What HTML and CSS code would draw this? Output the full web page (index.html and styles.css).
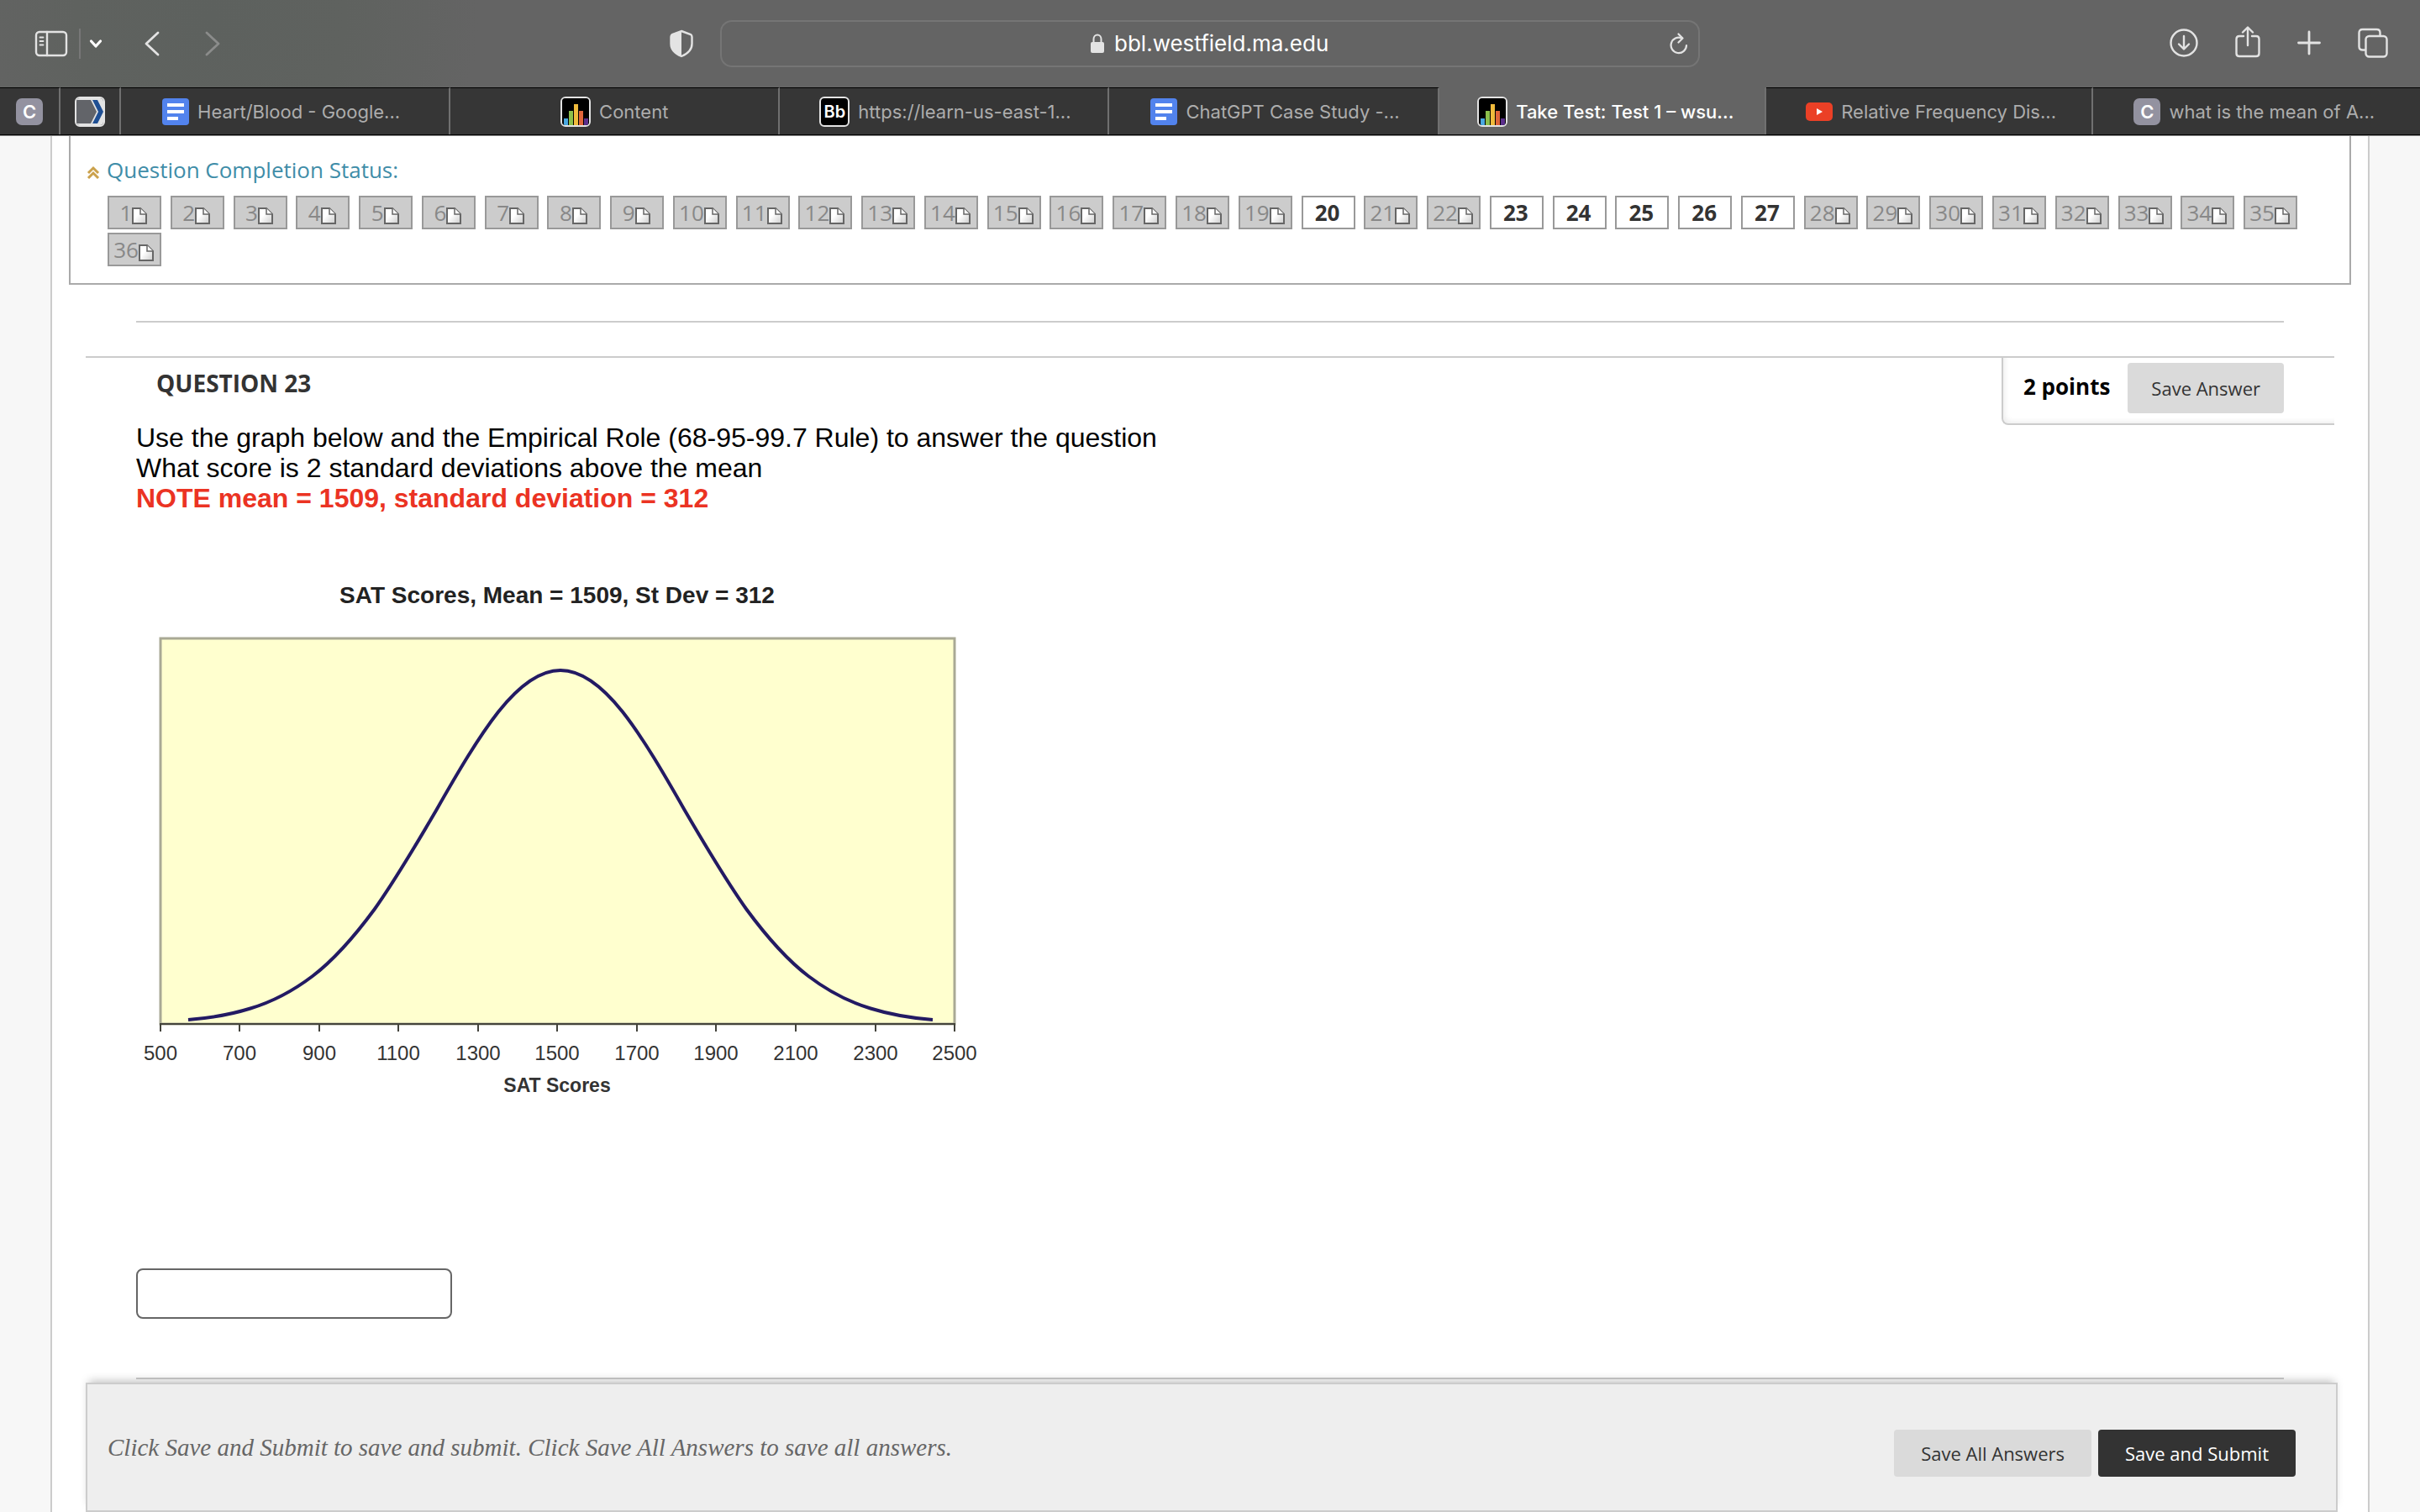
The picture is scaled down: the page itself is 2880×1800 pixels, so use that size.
FILE: index.html
```html
<!DOCTYPE html>
<html lang="en">
<head>
    <meta charset="UTF-8">
    <meta name="viewport" content="width=device-width, initial-scale=1.0">
    <title>Take Test: Test 1</title>
    <link rel="stylesheet" href="styles.css">
</head>
<body>
    <!-- Shared icons -->
    <svg class="defs" width="0" height="0" aria-hidden="true">
        <defs>
            <linearGradient id="paper" x1="0" y1="0" x2="1" y2="1">
                <stop offset="0.4" stop-color="#fff"/>
                <stop offset="1" stop-color="#ccc"/>
            </linearGradient>
        </defs>
        <symbol id="page-icon" viewBox="0 0 18 20">
            <path d="M1 1H10L17 8V19H1Z" fill="url(#paper)" stroke="#666" stroke-width="2"/>
            <path d="M10 1V8H17" fill="#fff" stroke="#666" stroke-width="1.5"/>
        </symbol>
        <symbol id="docs-icon" viewBox="0 0 32 32">
            <rect width="32" height="32" rx="4" fill="#5283ed"/>
            <path d="M6 6H26V10H6ZM6 14H26V18H6ZM6 22H19V26H6Z" fill="#fff"/>
        </symbol>
        <symbol id="chart-icon" viewBox="0 0 32 32">
            <rect width="32" height="32" fill="#000"/>
            <path d="M2 24H7V34H2Z" fill="#4aa8e0"/>
            <path d="M8 15H13V34H8Z" fill="#8cbf4b"/>
            <path d="M14 7H19V34H14Z" fill="#f0bb3c"/>
            <path d="M20 15H25V34H20Z" fill="#e0653a"/>
            <path d="M26 24H31V34H26Z" fill="#5b2f8c"/>
        </symbol>
    </svg>

    <!-- Browser toolbar -->
    <header class="toolbar">
        <div class="tools tools-left">
            <button type="button" class="tool" aria-label="Sidebar">
                <svg width="40" height="32" viewBox="0 0 40 32" fill="none" stroke="#e3e3e3" stroke-width="2.4" stroke-linecap="round">
                    <rect x="2" y="2" width="36" height="28" rx="4"/>
                    <path d="M15 2V30"/>
                    <path d="M6.500 8.500H10.500M6.500 13H10.500M6.500 17.500H10.500" stroke-width="1.800"/>
                </svg>
            </button>
            <span class="divider"></span>
            <button type="button" class="tool menu" aria-label="Tab groups">
                <svg width="16" height="12" viewBox="0 0 16 12" fill="none" stroke="#fff" stroke-width="3.2" stroke-linecap="round" stroke-linejoin="round"><path d="M2.500 3L8 9L13.500 3"/></svg>
            </button>
            <button type="button" class="tool back" aria-label="Back">
                <svg width="18" height="30" viewBox="0 0 18 30" fill="none" stroke="#e3e3e3" stroke-width="2.8" stroke-linecap="round" stroke-linejoin="round"><path d="M16 2L2 15L16 28"/></svg>
            </button>
            <button type="button" class="tool forward" aria-label="Forward">
                <svg width="18" height="30" viewBox="0 0 18 30" fill="none" stroke="#8b8c8b" stroke-width="2.8" stroke-linecap="round" stroke-linejoin="round"><path d="M2 2L16 15L2 28"/></svg>
            </button>
            <button type="button" class="tool shield" aria-label="Privacy report">
                <svg width="28" height="34" viewBox="0 0 28 34">
                    <path d="M14 2L25 6Q26.500 7 26.500 9V17Q26.500 27 14 32Q1.500 27 1.500 17V9Q1.500 7 3 6Z" fill="none" stroke="#e3e3e3" stroke-width="2.4"/>
                    <path d="M14 2L3 6Q1.500 7 1.500 9V17Q1.500 27 14 32Z" fill="#e3e3e3"/>
                </svg>
            </button>
        </div>
        <form class="address">
            <svg width="16" height="24" viewBox="0 0 16 24">
                <rect y="10" width="16" height="13" rx="2" fill="#e3e3e3"/>
                <path d="M3.500 11V6.500A4.500 5 0 0 1 12.500 6.500V11" fill="none" stroke="#e3e3e3" stroke-width="2"/>
            </svg>
            <input type="text" value="bbl.westfield.ma.edu" aria-label="Address">
            <button type="button" class="tool reload" aria-label="Reload">
                <svg width="22" height="26" viewBox="0 0 22 26" fill="none" stroke="#e3e3e3" stroke-width="2.200" stroke-linecap="round" stroke-linejoin="round">
                    <path d="M20 15A9.200 9.200 0 1 1 14.500 6.500"/><path d="M10.500 1.500L15.500 6.500L10.500 11.500"/>
                </svg>
            </button>
        </form>
        <div class="tools tools-right">
            <button type="button" class="tool" aria-label="Downloads">
                <svg width="34" height="38" viewBox="0 0 34 38" fill="none" stroke="#e3e3e3" stroke-width="2.400" stroke-linecap="round" stroke-linejoin="round">
                    <circle cx="17" cy="20" r="15.500"/><path d="M17 12V27M11 21.500L17 27.500L23 21.500"/>
                </svg>
            </button>
            <button type="button" class="tool" aria-label="Share">
                <svg width="30" height="38" viewBox="0 0 30 38" fill="none" stroke="#e3e3e3" stroke-width="2.400" stroke-linecap="round" stroke-linejoin="round">
                    <path d="M10 12H5Q1.500 12 1.500 15.500V32.500Q1.500 36 5 36H25Q28.500 36 28.500 32.500V15.500Q28.500 12 25 12H20"/><path d="M15 23V2M9 7.500L15 1.500L21 7.500"/>
                </svg>
            </button>
            <button type="button" class="tool" aria-label="New tab">
                <svg width="28" height="38" viewBox="0 0 28 38" stroke="#e3e3e3" stroke-width="2.800" stroke-linecap="round"><path d="M14 7V33M1.500 20H26.500"/></svg>
            </button>
            <button type="button" class="tool" aria-label="Tab overview">
                <svg width="36" height="38" viewBox="0 0 36 38" fill="none" stroke="#e3e3e3" stroke-width="2.400">
                    <rect x="9.500" y="12" width="25" height="24.500" rx="4"/>
                    <path d="M9 28.500H6Q1.500 28.500 1.500 24.500V8Q1.500 4 5.500 4H22.500Q26.500 4 26.500 8V12"/>
                </svg>
            </button>
        </div>
    </header>

    <!-- Tabs -->
    <nav class="tabs">
        <a href="#" class="tab pinned"><span class="favicon letter">C</span></a>
        <a href="#" class="tab pinned">
            <svg class="favicon framed" viewBox="0 0 32 32">
                <rect width="32" height="32" fill="#e3e3e3"/>
                <path d="M0 2H17L24 16L17 30H0Z" fill="#626469"/>
                <path d="M19 2H25L32 16L25 30H19L26 16Z" fill="#1f4f93"/>
            </svg>
        </a>
        <a href="#" class="tab"><svg class="favicon"><use href="#docs-icon"/></svg><span class="label">Heart/Blood - Google...</span></a>
        <a href="#" class="tab"><svg class="favicon framed"><use href="#chart-icon"/></svg><span class="label short">Content</span></a>
        <a href="#" class="tab"><span class="favicon framed bb">Bb</span><span class="label">https://learn-us-east-1...</span></a>
        <a href="#" class="tab"><svg class="favicon"><use href="#docs-icon"/></svg><span class="label">ChatGPT Case Study -...</span></a>
        <a href="#" class="tab active"><svg class="favicon framed"><use href="#chart-icon"/></svg><span class="label">Take Test: Test 1 – wsu...</span></a>
        <a href="#" class="tab">
            <svg class="favicon" viewBox="0 0 32 32"><rect y="5" width="32" height="22" rx="5" fill="#eb4026"/><path d="M13 12L20 16L13 20Z" fill="#fff"/></svg>
            <span class="label">Relative Frequency Dis...</span>
        </a>
        <a href="#" class="tab"><span class="favicon letter">C</span><span class="label">what is the mean of A...</span></a>
    </nav>

    <!-- Test page -->
    <main class="page">
        <section class="status">
            <h2><a href="#">
                <svg width="16" height="16" viewBox="0 0 16 16" fill="none" stroke="#cba14c" stroke-width="3"><path d="M2 9L8 3L14 9M2 15L8 9L14 15"/></svg>
                Question Completion Status:</a></h2>
            <ul class="numbers">
                <li><a href="#">1<svg><use href="#page-icon"/></svg></a></li>
                <li><a href="#">2<svg><use href="#page-icon"/></svg></a></li>
                <li><a href="#">3<svg><use href="#page-icon"/></svg></a></li>
                <li><a href="#">4<svg><use href="#page-icon"/></svg></a></li>
                <li><a href="#">5<svg><use href="#page-icon"/></svg></a></li>
                <li><a href="#">6<svg><use href="#page-icon"/></svg></a></li>
                <li><a href="#">7<svg><use href="#page-icon"/></svg></a></li>
                <li><a href="#">8<svg><use href="#page-icon"/></svg></a></li>
                <li><a href="#">9<svg><use href="#page-icon"/></svg></a></li>
                <li><a href="#">10<svg><use href="#page-icon"/></svg></a></li>
                <li><a href="#">11<svg><use href="#page-icon"/></svg></a></li>
                <li><a href="#">12<svg><use href="#page-icon"/></svg></a></li>
                <li><a href="#">13<svg><use href="#page-icon"/></svg></a></li>
                <li><a href="#">14<svg><use href="#page-icon"/></svg></a></li>
                <li><a href="#">15<svg><use href="#page-icon"/></svg></a></li>
                <li><a href="#">16<svg><use href="#page-icon"/></svg></a></li>
                <li><a href="#">17<svg><use href="#page-icon"/></svg></a></li>
                <li><a href="#">18<svg><use href="#page-icon"/></svg></a></li>
                <li><a href="#">19<svg><use href="#page-icon"/></svg></a></li>
                <li><a href="#" class="saved">20</a></li>
                <li><a href="#">21<svg><use href="#page-icon"/></svg></a></li>
                <li><a href="#">22<svg><use href="#page-icon"/></svg></a></li>
                <li><a href="#" class="saved">23</a></li>
                <li><a href="#" class="saved">24</a></li>
                <li><a href="#" class="saved">25</a></li>
                <li><a href="#" class="saved">26</a></li>
                <li><a href="#" class="saved">27</a></li>
                <li><a href="#">28<svg><use href="#page-icon"/></svg></a></li>
                <li><a href="#">29<svg><use href="#page-icon"/></svg></a></li>
                <li><a href="#">30<svg><use href="#page-icon"/></svg></a></li>
                <li><a href="#">31<svg><use href="#page-icon"/></svg></a></li>
                <li><a href="#">32<svg><use href="#page-icon"/></svg></a></li>
                <li><a href="#">33<svg><use href="#page-icon"/></svg></a></li>
                <li><a href="#">34<svg><use href="#page-icon"/></svg></a></li>
                <li><a href="#">35<svg><use href="#page-icon"/></svg></a></li>
                <li><a href="#">36<svg><use href="#page-icon"/></svg></a></li>
            </ul>
        </section>

        <hr class="rule first">

        <section class="question">
            <div class="question-body">
                <h3 id="q23">QUESTION 23</h3>
                <p>Use the graph below and the Empirical Role (68-95-99.7 Rule) to answer the question<br>
                What score is 2 standard deviations above the mean<br>
                <strong>NOTE mean = 1509, standard deviation = 312</strong></p>

                <svg class="graph" width="1020" height="640" viewBox="0 0 1020 640" role="img" aria-label="Normal curve of SAT scores">
                    <text class="graph-title" x="501" y="38">SAT Scores, Mean = 1509, St Dev = 312</text>
                    <rect x="29" y="80" width="945" height="459" fill="#ffffcf" stroke="#a9a995" stroke-width="3"/>
                    <path d="M28 539H975M29 539V548M123 539V548M218 539V548M312 539V548M407 539V548M501 539V548M596 539V548M690 539V548M785 539V548M880 539V548M974 539V548" fill="none" stroke="#44443c" stroke-width="2"/>
                    <path d="M62 534C87 532 112 528 136 520.500C161 513 185 501 210 482C235 463 259 436 284 402C308 368 333 326 357.500 284C382 241 407 198 431 167.500C456 136 480 118 505 118C530 118 554 136 579 167.500C603 198 628 241 652.500 284C677 326 702 368 726 402C751 436 775 463 800 482C825 501 849 513 874 520.500C898 528 923 532 948 534" fill="none" stroke="#231a63" stroke-width="4"/>
                    <g class="graph-ticks">
                        <text x="29" y="582">500</text>
                        <text x="123" y="582">700</text>
                        <text x="218" y="582">900</text>
                        <text x="312" y="582">1100</text>
                        <text x="407" y="582">1300</text>
                        <text x="501" y="582">1500</text>
                        <text x="596" y="582">1700</text>
                        <text x="690" y="582">1900</text>
                        <text x="785" y="582">2100</text>
                        <text x="880" y="582">2300</text>
                        <text x="974" y="582">2500</text>
                    </g>
                    <text class="graph-axis" x="501" y="620">SAT Scores</text>
                </svg>

                <input type="text" class="answer" name="answer" aria-labelledby="q23">
            </div>
            <div class="points">
                <strong>2 points</strong>
                <button type="button" class="btn tall">Save Answer</button>
            </div>
        </section>

        <hr class="rule last">

        <!-- Save bar -->
        <footer class="savebar">
            <p>Click Save and Submit to save and submit. Click Save All Answers to save all answers.</p>
            <button type="button" class="btn">Save All Answers</button>
            <button type="submit" class="btn dark">Save and Submit</button>
        </footer>
    </main>
</body>
</html>
```
FILE: styles.css
```css
* {
    margin: 0;
    padding: 0;
    box-sizing: border-box;
}

body {
    min-height: 100vh;
    display: flex;
    flex-direction: column;
    background: #f7f7f7;
    font-family: "Open Sans", sans-serif;
    font-size: 26px;
    line-height: 36px;
    color: #333;
}

a {
    color: inherit;
    text-decoration: none;
}

button,
input {
    font: inherit;
    color: inherit;
}

.defs {
    position: absolute;
}

/* Browser toolbar */
.toolbar {
    height: 104px;
    display: grid;
    grid-template-columns: 1fr minmax(0, 1166px) 1fr;
    align-items: center;
    background: radial-gradient(circle at 250px 20px, #5d615e 0, #5f625f 160px, #646464 320px);
    font-family: Inter, sans-serif;
}

.tools {
    display: flex;
    align-items: center;
}

.tool {
    display: flex;
    border: none;
    background: none;
}

.tools-left {
    padding: 0 32px 0 41px;
}

.divider {
    width: 2px;
    height: 36px;
    margin: 0 10px 0 13px;
    background: #777;
}

.back {
    margin-left: 50px;
}

.forward {
    margin-left: 54px;
}

.shield {
    margin-left: auto;
}

.tools-right {
    justify-content: flex-end;
    gap: 44px;
    padding-right: 38px;
    padding-bottom: 4px;
}

.address {
    height: 56px;
    display: flex;
    align-items: center;
    justify-content: center;
    gap: 12px;
    position: relative;
    border: 2px solid #757575;
    border-radius: 14px;
}

.address input {
    width: 256px;
    border: none;
    outline: none;
    background: none;
    color: #fff;
    font-size: 26px;
}

.reload {
    position: absolute;
    right: 12px;
}

/* Tabs */
.tabs {
    display: grid;
    grid-template-columns: 72px 72px repeat(4, 392fr) repeat(3, 389fr);
    border-bottom: 1px solid #000;
    box-shadow: 0 1px #8a8a8a;
    position: relative;
    font-family: Inter, sans-serif;
    font-size: 22px;
}

.tab {
    height: 56px;
    display: flex;
    align-items: center;
    justify-content: center;
    gap: 10px;
    border-top: 1px solid #000;
    border-right: 2px solid #707070;
    background: #363636;
    color: #adadad;
}

.tab:last-child {
    border-right: none;
}

.tab.active {
    border-top-color: #646464;
    background: #646464;
    color: #fff;
    font-weight: 500;
}

.label {
    width: 250px;
    white-space: nowrap;
}

.label.short {
    width: auto;
}

.favicon {
    flex: none;
    width: 32px;
    height: 32px;
}

.favicon.framed {
    width: 36px;
    height: 36px;
    border: 2px solid #e3e3e3;
    border-radius: 6px;
}

.letter,
.bb {
    line-height: 32px;
    text-align: center;
    font-weight: 600;
    color: #fff;
}

.letter {
    border-radius: 7px;
    background: #9392a0;
}

.bb {
    background: #000;
    font-size: 20px;
}

/* Test page */
.page {
    flex: 1;
    display: flex;
    flex-direction: column;
    margin: 1px 60px 0;
    border: solid #ccc;
    border-width: 0 2px;
    background: #fff;
}

.status {
    margin: 0 20px;
    padding: 22px 0 16px 44px;
    border: 2px solid #aaa;
    border-top: none;
}

.status h2 {
    margin-left: -25px;
    font-size: 26px;
    font-weight: 400;
    color: #3f8da8;
}

.status h2 a {
    display: flex;
    align-items: center;
    gap: 8px;
}

.status h2 svg {
    margin-top: 5px;
}

.numbers {
    margin-top: 13px;
    list-style: none;
    line-height: 40px;
}

.numbers li {
    display: inline-block;
    margin: 0 4px 4px 0;
    vertical-align: top;
}

.numbers a {
    width: 64px;
    height: 40px;
    display: flex;
    justify-content: center;
    padding-right: 2px;
    border: 2px solid #999;
    background: #ccc;
    color: #888;
    line-height: 36px;
}

.numbers svg {
    width: 18px;
    height: 20px;
    margin-top: 12px;
}

.numbers a.saved {
    background: #fff;
    color: #333;
    font-weight: 700;
}

.rule {
    margin: 0 100px;
    border: none;
    border-top: 2px solid #ccc;
}

.rule.first {
    margin-top: 43px;
    margin-bottom: 40px;
}

.question {
    display: flex;
    align-items: flex-start;
    margin: 0 40px;
    border-top: 2px solid #ccc;
}

.question-body {
    flex: 1;
    padding: 12px 0 70px 60px;
}

.question-body h3 {
    margin: 0 0 29px 24px;
    font-size: 28px;
}

.question-body p {
    font-family: "Liberation Sans", Arial, sans-serif;
    font-size: 32px;
    color: #000;
}

.question-body p strong {
    color: #eb3323;
}

.graph {
    display: block;
    margin-top: 69px;
    font-family: "Liberation Sans", Arial, sans-serif;
    font-size: 24px;
    text-anchor: middle;
    fill: #333;
}

.graph-title {
    font-size: 28px;
    font-weight: 700;
    fill: #222;
}

.graph-axis {
    font-size: 23px;
    font-weight: 700;
}

.answer {
    display: block;
    width: 376px;
    height: 60px;
    margin-top: 190px;
    padding: 0 12px;
    border: 2px solid #666;
    border-radius: 8px;
    background: #fff;
}

.points {
    height: 80px;
    display: flex;
    align-items: flex-start;
    gap: 21px;
    padding: 6px 60px 0 24px;
    border: solid #ccc;
    border-width: 0 0 2px 2px;
    border-bottom-left-radius: 8px;
    box-shadow: inset 4px -4px 6px -2px #eee;
    color: #000;
}

.points strong {
    line-height: 56px;
}

.btn {
    height: 56px;
    padding: 0 32px;
    border: none;
    border-radius: 4px;
    background: #dadada;
    color: #333;
    font-size: 22px;
}

.btn.tall {
    height: 60px;
    padding: 0 28px;
}

.btn.dark {
    background: #333;
    color: #fff;
    font-weight: 500;
}

/* Save bar */
.savebar {
    display: flex;
    align-items: center;
    gap: 8px;
    height: 154px;
    margin: auto 36px 0 40px;
    padding: 14px 48px 0 24px;
    border: 2px solid #ccc;
    background: #eee;
    box-shadow: 0 -6px 10px -4px rgba(0, 0, 0, 0.25);
}

.savebar p {
    flex: 1;
    padding-bottom: 14px;
    font-family: "Liberation Serif", serif;
    font-size: 29px;
    font-style: italic;
    color: #666;
}
```
